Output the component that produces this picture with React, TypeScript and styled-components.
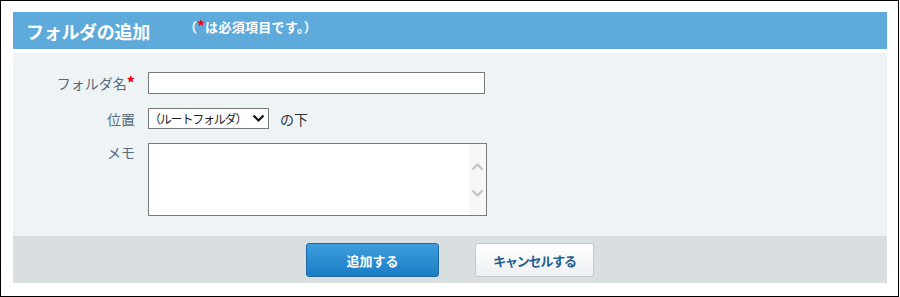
import { FC } from "react";
import styled, { createGlobalStyle } from "styled-components";

const GlobalStyle = createGlobalStyle`
  html, body {
    margin: 0;
    padding: 0;
    background: #ffffff;
  }
  body {
    font-family: "Noto Sans CJK JP", "Noto Sans", sans-serif;
  }
`;

const App: FC = () => {
  return (
    <>
      <GlobalStyle />
      <FolderAddFrame>
        <FolderAddHeader>
          <FolderAddTitle>フォルダの追加</FolderAddTitle>
          <RequiredNote>
            （<Asterisk>*</Asterisk>は必須項目です。）
          </RequiredNote>
        </FolderAddHeader>
        <FolderAddBody>
          <FormGrid>
            <FieldLabel>
              フォルダ名<Asterisk>*</Asterisk>
            </FieldLabel>
            <TextInput type="text" />

            <FieldLabel>位置</FieldLabel>
            <SelectRow>
              <SelectBox>
                <SelectText>（ルートフォルダ）</SelectText>
                <ChevronDown />
              </SelectBox>
              <SelectSuffix>の下</SelectSuffix>
            </SelectRow>

            <FieldLabel $top>メモ</FieldLabel>
            <MemoBox>
              <MemoArea />
              <MemoScrollTrack>
                <ScrollArrow direction="up" />
                <ScrollArrow direction="down" />
              </MemoScrollTrack>
            </MemoBox>
          </FormGrid>
        </FolderAddBody>
        <FolderAddFooter>
          <PrimaryButton>追加する</PrimaryButton>
          <SecondaryButton>キャンセルする</SecondaryButton>
        </FolderAddFooter>
      </FolderAddFrame>
    </>
  );
};

const ChevronDown: FC = () => (
  <svg width="13" height="9" viewBox="0 0 13 9">
    <path
      d="M1.5 1.5 L6.5 6.5 L11.5 1.5"
      fill="none"
      stroke="#111"
      strokeWidth="2.2"
    />
  </svg>
);

const ScrollArrow: FC<{ direction: "up" | "down" }> = ({ direction }) => (
  <svg width="13" height="9" viewBox="0 0 13 9">
    <path
      d={direction === "up" ? "M1.5 7.5 L6.5 2.5 L11.5 7.5" : "M1.5 1.5 L6.5 6.5 L11.5 1.5"}
      fill="none"
      stroke="#c2c2c2"
      strokeWidth="2"
    />
  </svg>
);

const FolderAddFrame = styled.div`
  box-sizing: border-box;
  width: 899px;
  height: 297px;
  border: 1px solid #000000;
  padding: 11px 11px 13px 12px;
  display: flex;
  flex-direction: column;
  background: #ffffff;
`;

const FolderAddHeader = styled.div`
  height: 37px;
  background: #5eaadb;
  display: flex;
  align-items: center;
  padding-left: 13px;
  color: #ffffff;
`;

const FolderAddTitle = styled.div`
  font-size: 18px;
  font-weight: 700;
  letter-spacing: -0.3px;
`;

const RequiredNote = styled.div`
  margin-left: 34px;
  margin-top: -8px;
  font-size: 13px;
  font-weight: 700;
  letter-spacing: 0.3px;
  white-space: nowrap;
`;

const Asterisk = styled.span`
  color: #e60012;
  font-weight: 700;
  font-size: 1.15em;
  line-height: 0;
`;

const FolderAddBody = styled.div`
  margin-top: 4px;
  height: 183px;
  box-sizing: border-box;
  background: #eef3f6;
  padding-top: 19px;
`;

const FormGrid = styled.div`
  display: grid;
  grid-template-columns: 122px auto;
  column-gap: 13px;
  row-gap: 15px;
  align-items: center;
  justify-items: start;
`;

const FieldLabel = styled.div<{ $top?: boolean }>`
  justify-self: end;
  align-self: ${(p) => (p.$top ? "start" : "center")};
  margin-top: ${(p) => (p.$top ? "-2px" : "0")};
  font-size: 14px;
  line-height: 20px;
  color: #5a6a7a;
  white-space: nowrap;
`;

const TextInput = styled.input`
  box-sizing: border-box;
  width: 337px;
  height: 22px;
  border: 1px solid #7a7a7a;
  background: #ffffff;
  margin: 0;
  padding: 0 4px;
  outline: none;
`;

const SelectRow = styled.div`
  display: flex;
  align-items: center;
  gap: 11px;
  margin-top: -1px;
`;

const SelectBox = styled.div`
  box-sizing: border-box;
  width: 121px;
  height: 21px;
  border: 1px solid #7a7a7a;
  background: #ffffff;
  display: flex;
  align-items: center;
  justify-content: space-between;
  padding: 0 3px 0 0;
  overflow: hidden;
`;

const SelectText = styled.span`
  font-size: 12px;
  color: #222;
  letter-spacing: -1.2px;
  white-space: nowrap;
`;

const SelectSuffix = styled.span`
  font-size: 14px;
  color: #333;
`;

const MemoBox = styled.div`
  box-sizing: border-box;
  width: 339px;
  height: 73px;
  border: 1px solid #7a7a7a;
  background: #ffffff;
  display: flex;
  margin-top: -1px;
`;

const MemoArea = styled.textarea`
  flex: 1;
  border: none;
  outline: none;
  resize: none;
  margin: 0;
  padding: 2px;
  background: transparent;
`;

const MemoScrollTrack = styled.div`
  width: 17px;
  background: #f7f7f7;
  display: flex;
  flex-direction: column;
  align-items: center;
  gap: 18px;
  padding-top: 18px;
`;

const FolderAddFooter = styled.div`
  height: 47px;
  background: #d9dee1;
  display: flex;
  justify-content: center;
  align-items: flex-start;
  padding-top: 7px;
  box-sizing: border-box;
  gap: 36px;
`;

const BaseButton = styled.button`
  box-sizing: border-box;
  height: 34px;
  border-radius: 3px;
  font-family: "Noto Sans CJK JP", "Noto Sans", sans-serif;
  font-size: 13px;
  font-weight: 700;
  cursor: pointer;
  padding: 0;
`;

const PrimaryButton = styled(BaseButton)`
  width: 133px;
  color: #ffffff;
  border: 1px solid #1d6aa6;
  background: linear-gradient(#3d9ddc, #1a7ec6);
`;

const SecondaryButton = styled(BaseButton)`
  width: 119px;
  color: #245d8f;
  border: 1px solid #c3c8cc;
  background: linear-gradient(#ffffff, #eef0f1);
  letter-spacing: -1.2px;
`;

export default App;
